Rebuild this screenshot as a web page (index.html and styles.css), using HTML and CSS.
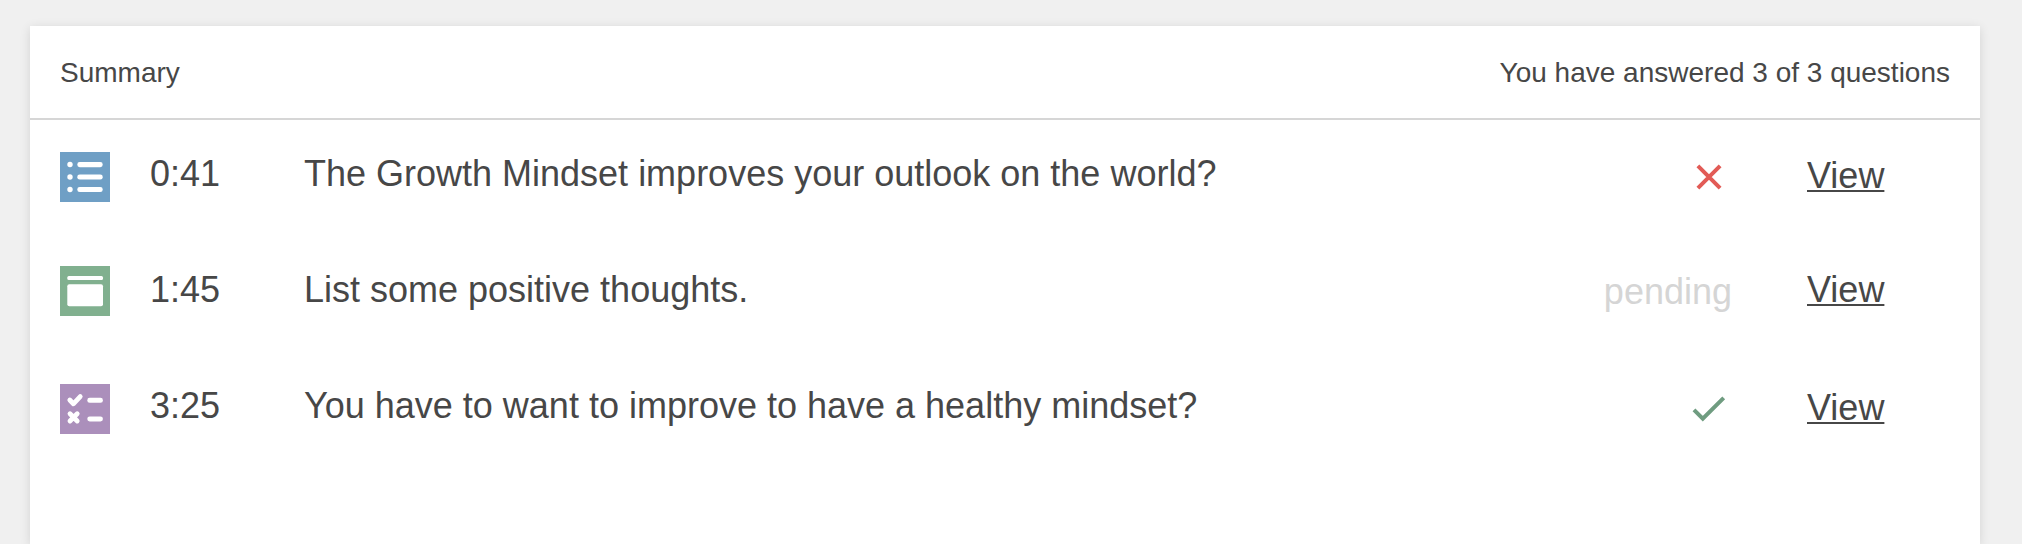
FILE: index.html
```
<!DOCTYPE html>
<html lang="en">
  <head>
    <meta charset="utf-8">
    <title>Summary</title>
    <link rel="stylesheet" href="styles.css">
  </head>
  <body>
    <div class="summary">
      <div class="summary-header">
        <div class="summary-title">Summary</div>
        <div class="summary-count">You have answered 3 of 3 questions</div>
      </div>
      <div class="question-list">
        <div class="question">
          <svg class="type-icon blue" viewBox="0 0 50 50">
            <circle cx="10" cy="12.5" r="2.7"/>
            <circle cx="10" cy="25" r="2.7"/>
            <circle cx="10" cy="37.5" r="2.7"/>
            <rect x="17.3" y="10" width="25.4" height="5.2" rx="2.4"/>
            <rect x="17.3" y="22.4" width="25.4" height="5.2" rx="2.4"/>
            <rect x="17.3" y="34.9" width="25.4" height="5.2" rx="2.4"/>
          </svg>
          <div class="time">0:41</div>
          <div class="text">The Growth Mindset improves your outlook on the world?</div>
          <div class="status">
            <svg class="mark wrong" viewBox="0 0 36 36"><path d="M6.9 6.9L29.1 29.1M29.1 6.9L6.9 29.1"/></svg>
          </div>
          <a class="view" href="#">View</a>
        </div>
        <div class="question free-text">
          <svg class="type-icon green" viewBox="0 0 50 50">
            <rect x="7.3" y="10" width="35.7" height="4" rx="1.5"/>
            <rect x="7.3" y="18.3" width="35.7" height="21.9" rx="2"/>
          </svg>
          <div class="time">1:45</div>
          <div class="text">List some positive thoughts.</div>
          <div class="status pending">pending</div>
          <a class="view" href="#">View</a>
        </div>
        <div class="question">
          <svg class="type-icon purple" viewBox="0 0 50 50">
            <path class="line" d="M9.8 16L13.4 19.8L20.2 12.6M10 29.8L17.2 37M17.2 29.8L10 37"/>
            <rect x="27.3" y="13.8" width="15.6" height="5" rx="2.4"/>
            <rect x="27.3" y="32.4" width="15.6" height="5" rx="2.4"/>
          </svg>
          <div class="time">3:25</div>
          <div class="text">You have to want to improve to have a healthy mindset?</div>
          <div class="status">
            <svg class="mark right" viewBox="0 0 36 36"><path d="M3 18.8L11.8 27.6L32.7 6.9"/></svg>
          </div>
          <a class="view" href="#">View</a>
        </div>
      </div>
    </div>
  </body>
</html>
```

FILE: styles.css
```
body {
  margin: 0;
  padding-top: 26px;
  background-color: #f0f0f0;
  color: #474747;
  font-family: "Liberation Sans", Arial, Helvetica, sans-serif
}

.summary {
  box-sizing: border-box;
  width: 1950px;
  height: calc(100vh - 26px);
  margin-left: 30px;
  background-color: white;
  box-shadow: 0 2px 10px rgba(0, 0, 0, .12)
}
.summary-header {
  display: flex;
  justify-content: space-between;
  height: 92px;
  padding: 0 30px;
  border-bottom: 2px solid #d6d6d6;
  font-size: 28px;
  line-height: 93px
}

.question-list {padding: 30px 30px 0}
.question {
  display: grid;
  grid-template-columns: 90px 154px 1fr 220px 143px;
  align-items: start;
  height: 116px;
  font-size: 36px;
  line-height: 42px
}

.type-icon {width: 50px; height: 50px; margin-top: 2px; fill: white}
.type-icon .line {fill: none; stroke: white; stroke-width: 4.8; stroke-linecap: round; stroke-linejoin: round}
.blue {background-color: #6f9fc5}
.green {background-color: #81b08f}
.purple {background-color: #ab8fbb}

.time, .text {margin-top: 3px}
.status {margin-top: 5px; margin-right: 80px; text-align: right}
.pending {margin-right: 75px; color: #d5d5d5}
.view {margin-top: 5px; color: inherit; text-decoration: underline; text-decoration-thickness: 2px; text-underline-offset: 2px; text-decoration-skip-ink: none}

.mark {display: block; width: 36px; height: 36px; margin: 4px 0 0 auto; fill: none; stroke-width: 4}
.wrong {stroke: #e25b56}
.right {stroke: #6f9c80}

/* free text rows sit a little higher */
.free-text .type-icon {margin-top: 0}
.free-text .view {margin-top: 3px}
```
